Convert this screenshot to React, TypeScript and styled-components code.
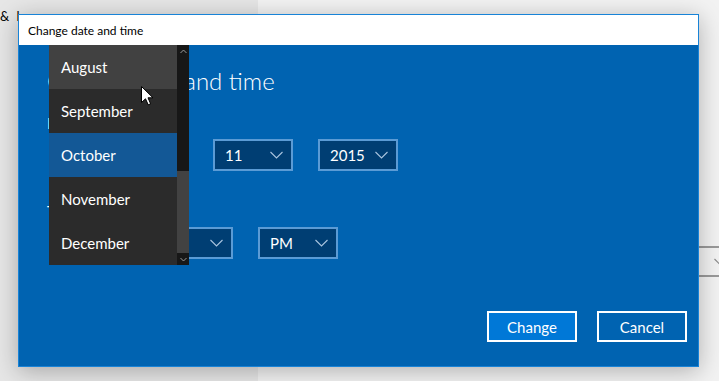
import styled, { createGlobalStyle } from 'styled-components';

const GlobalStyle = createGlobalStyle`
	html, body {
		margin: 0;
		padding: 0;
		width: 719px;
		height: 381px;
		overflow: hidden;
		font-family: Lato, 'Noto Sans', sans-serif;
	}
`;

const Desktop = styled.div`
	position: relative;
	width: 719px;
	height: 381px;
	display: grid;
	grid-template-columns: 258px 1fr;
`;

const SidePane = styled.div`
	background: #e6e6e6;
	padding: 8px 0 0 0;
	font-size: 13px;
	line-height: 16px;
	word-spacing: 4px;
	color: #000;
	white-space: nowrap;
	overflow: hidden;
`;

const MainPane = styled.div`
	background: #f2f2f2;
	padding-top: 246px;
	padding-left: 207px;
	overflow: hidden;
`;

const GrayCombo = styled.div`
	width: 260px;
	height: 27px;
	border: 2px solid #999;
	display: flex;
	align-items: center;
	justify-content: flex-end;
	padding-right: 10px;
	box-sizing: content-box;
`;

const Window = styled.div`
	position: absolute;
	left: 18px;
	top: 14px;
	width: 679px;
	height: 351px;
	border: 1px solid #1883d7;
	display: flex;
	flex-direction: column;
	box-shadow: 0 4px 22px rgba(0, 0, 0, 0.28);
`;

const TitleBar = styled.div`
	height: 30px;
	background: #fff;
	display: flex;
	align-items: center;
	padding-left: 9px;
	font-size: 12px;
	color: #000;
`;

const Body = styled.div`
	flex: 1;
	background: #0063b1;
	color: #fff;
	display: flex;
	flex-direction: column;
	padding: 20px 11px 24px 30px;
`;

const Heading = styled.div`
	font-size: 24px;
	font-weight: 300;
	line-height: 32px;
	margin-left: -2px;
`;

const Label = styled.div<{ $top: number }>`
	font-size: 15px;
	line-height: 20px;
	margin: ${(p) => p.$top}px 0 6px -2px;
`;

const Row = styled.div`
	display: flex;
	gap: 25px;
`;

const Combo = styled.div<{ $w: number }>`
	width: ${(p) => p.$w}px;
	height: 32px;
	box-sizing: border-box;
	border: 2px solid #5b9bd5;
	background: #003e73;
	display: flex;
	align-items: center;
	justify-content: space-between;
	padding: 0 8px 0 10px;
	font-size: 15px;
`;

const Footer = styled.div`
	margin-top: auto;
	display: flex;
	justify-content: flex-end;
	gap: 20px;
`;

const Button = styled.div<{ $primary?: boolean }>`
	width: 90px;
	height: 31px;
	box-sizing: border-box;
	border: 2px solid #fff;
	background: ${(p) => (p.$primary ? '#0078d7' : '#0063b1')};
	display: flex;
	align-items: center;
	justify-content: center;
	font-size: 15px;
	color: #fff;
`;

const Popup = styled.div`
	position: absolute;
	left: 30px;
	top: 30px;
	width: 140px;
	height: 220px;
	display: flex;
	background: #2b2b2b;
`;

const List = styled.div`
	flex: 1;
	display: flex;
	flex-direction: column;
`;

const Item = styled.div<{ $state?: 'hover' | 'selected' }>`
	height: 44px;
	display: flex;
	align-items: center;
	padding-left: 12px;
	padding-bottom: 1px;
	box-sizing: border-box;
	font-size: 15px;
	color: #fff;
	background: ${(p) =>
		p.$state === 'hover' ? '#414141' : p.$state === 'selected' ? '#135896' : '#2b2b2b'};
`;

const ScrollBar = styled.div`
	width: 12px;
	background: #171717;
	display: flex;
	flex-direction: column;
`;

const ScrollArrow = styled.div`
	height: 12px;
	display: flex;
	align-items: center;
	justify-content: center;
`;

const Track = styled.div`
	flex: 1;
	display: flex;
	flex-direction: column;
	justify-content: flex-end;
`;

const Thumb = styled.div`
	height: 82px;
	background: #424242;
`;

const Cursor = styled.svg`
	position: absolute;
	left: 141px;
	top: 86px;
`;

const Chevron = ({ color = '#a9c4df' }: { color?: string }) => (
	<svg width='13' height='8' viewBox='0 0 13 8'>
		<path d='M0.5 1 L6.5 7 L12.5 1' fill='none' stroke={color} strokeWidth='1.1' />
	</svg>
);

const SmallArrow = ({ up }: { up?: boolean }) => (
	<svg width='7' height='5' viewBox='0 0 7 5'>
		<path
			d={up ? 'M0.5 4 L3.5 1 L6.5 4' : 'M0.5 1 L3.5 4 L6.5 1'}
			fill='none'
			stroke='#9a9a9a'
			strokeWidth='1'
		/>
	</svg>
);

const months = ['August', 'September', 'October', 'November', 'December'];

const App = () => {
	return (
		<>
			<GlobalStyle />
			<Desktop>
				<SidePane>&amp; language</SidePane>
				<MainPane>
					<GrayCombo>
						<Chevron color='#8a8a8a' />
					</GrayCombo>
				</MainPane>
				<Window>
					<TitleBar>Change date and time</TitleBar>
					<Body>
						<Heading>Change date and time</Heading>
						<Label $top={16}>Date</Label>
						<Row>
							<Combo $w={139}>
								October
								<Chevron />
							</Combo>
							<Combo $w={80}>
								11
								<Chevron />
							</Combo>
							<Combo $w={80}>
								2015
								<Chevron />
							</Combo>
						</Row>
						<Label $top={30}>Time</Label>
						<Row>
							<Combo $w={79}>
								4
								<Chevron />
							</Combo>
							<Combo $w={80}>
								22
								<Chevron />
							</Combo>
							<Combo $w={80}>
								PM
								<Chevron />
							</Combo>
						</Row>
						<Footer>
							<Button $primary>Change</Button>
							<Button>Cancel</Button>
						</Footer>
					</Body>
					<Popup>
						<List>
							{months.map((m, i) => (
								<Item key={m} $state={i === 0 ? 'hover' : i === 2 ? 'selected' : undefined}>
									{m}
								</Item>
							))}
						</List>
						<ScrollBar>
							<ScrollArrow>
								<SmallArrow up />
							</ScrollArrow>
							<Track>
								<Thumb />
							</Track>
							<ScrollArrow>
								<SmallArrow />
							</ScrollArrow>
						</ScrollBar>
					</Popup>
				</Window>
				<Cursor width='13' height='20' viewBox='0 0 13 20'>
					<path
						d='M0.5 0.5 L0.5 16.5 L4.5 12.8 L7.2 18.8 L9.6 17.8 L7 11.8 L12 11.8 Z'
						fill='#fff'
						stroke='#000'
						strokeWidth='1'
						strokeLinejoin='round'
					/>
				</Cursor>
			</Desktop>
		</>
	);
};

export default App;
